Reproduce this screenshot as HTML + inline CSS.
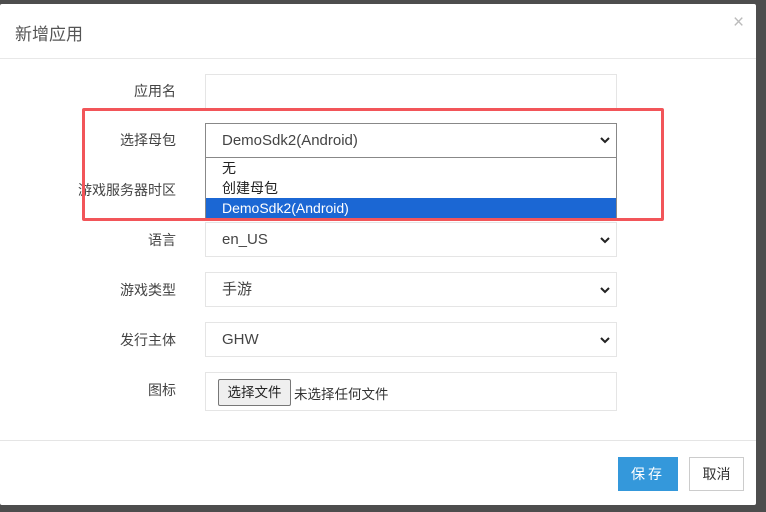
<!DOCTYPE html><html><head><meta charset="utf-8"><style>
body{margin:0;width:766px;height:512px;background:#4d4d4d;position:relative;overflow:hidden;font-family:"Liberation Sans","Noto Sans CJK SC",sans-serif;color:#333}
.m{position:absolute;left:0;top:4px;width:756px;height:501px;background:#fff;border-radius:2px}
.a{position:absolute}
.lab{position:absolute;right:590px;font-size:14px;color:#444;text-align:right;white-space:nowrap}
.box{position:absolute;left:205px;width:410px;height:33px;border:1px solid #e5e5e5;background:#fff;font-size:15px;color:#444;line-height:34px;box-sizing:content-box}
.box span{padding-left:16px}
.chev{position:absolute;right:6px;top:0;font-size:11px;color:#222}
</style></head><body>
<div class="m"></div>
<div class="a" style="left:15px;top:20px;font-size:17px;color:#555">新增应用</div>
<div class="a" style="left:733px;top:12px;font-size:19px;color:#bbb">×</div>
<div class="a" style="left:0;top:58px;width:756px;height:1px;background:#e8e8e8"></div>

<div class="lab" style="top:81px">应用名</div><div class="box" style="top:74px"></div>
<div class="lab" style="top:130px">选择母包</div>
<div class="box" style="top:123px;border-color:#888"><span>DemoSdk2(Android)</span><svg class="chev" style="top:12px" width="10" height="8" viewBox="0 0 10 8"><path d="M1 2l4 4 4-4" stroke="#222" stroke-width="2" fill="none"/></svg></div>
<div class="lab" style="top:180px">游戏服务器时区</div><div class="box" style="top:173px"></div>
<div class="lab" style="top:230px">语言</div><div class="box" style="top:222px"><span>en_US</span><svg class="chev" style="top:13px" width="10" height="8" viewBox="0 0 10 8"><path d="M1 2l4 4 4-4" stroke="#222" stroke-width="2" fill="none"/></svg></div>
<div class="lab" style="top:280px">游戏类型</div><div class="box" style="top:272px"><span>手游</span><svg class="chev" style="top:13px" width="10" height="8" viewBox="0 0 10 8"><path d="M1 2l4 4 4-4" stroke="#222" stroke-width="2" fill="none"/></svg></div>
<div class="lab" style="top:330px">发行主体</div><div class="box" style="top:322px"><span>GHW</span><svg class="chev" style="top:13px" width="10" height="8" viewBox="0 0 10 8"><path d="M1 2l4 4 4-4" stroke="#222" stroke-width="2" fill="none"/></svg></div>
<div class="lab" style="top:380px">图标</div><div class="box" style="top:372px;height:37px"></div>
<div class="a" style="left:218px;top:379px;width:71px;height:25px;border:1px solid #777;border-radius:2px;background:#efefef;font-size:13.5px;line-height:25px;text-align:center;color:#222">选择文件</div>
<div class="a" style="left:294px;top:383px;font-size:13.5px;color:#333">未选择任何文件</div>

<div class="a" style="left:205px;top:158px;width:410px;height:60px;border:1px solid #888;border-top:none;background:#fff;font-size:14px;line-height:20px">
<div style="padding-left:16px;color:#222">无</div><div style="padding-left:16px;color:#222">创建母包</div><div style="padding-left:16px;background:#1b67d4;color:#fff">DemoSdk2(Android)</div></div>
<div class="a" style="left:82px;top:108px;width:576px;height:107px;border:3px solid #f25559;border-radius:2px"></div>

<div class="a" style="left:0;top:440px;width:756px;height:1px;background:#e5e5e5"></div>
<div class="a" style="left:618px;top:457px;width:60px;height:34px;background:#3498db;color:#fff;font-size:14px;line-height:34px;text-align:center;letter-spacing:3px">保存</div>
<div class="a" style="left:689px;top:457px;width:53px;height:32px;border:1px solid #ccc;font-size:14px;line-height:32px;text-align:center;color:#333">取消</div>
</body></html>
